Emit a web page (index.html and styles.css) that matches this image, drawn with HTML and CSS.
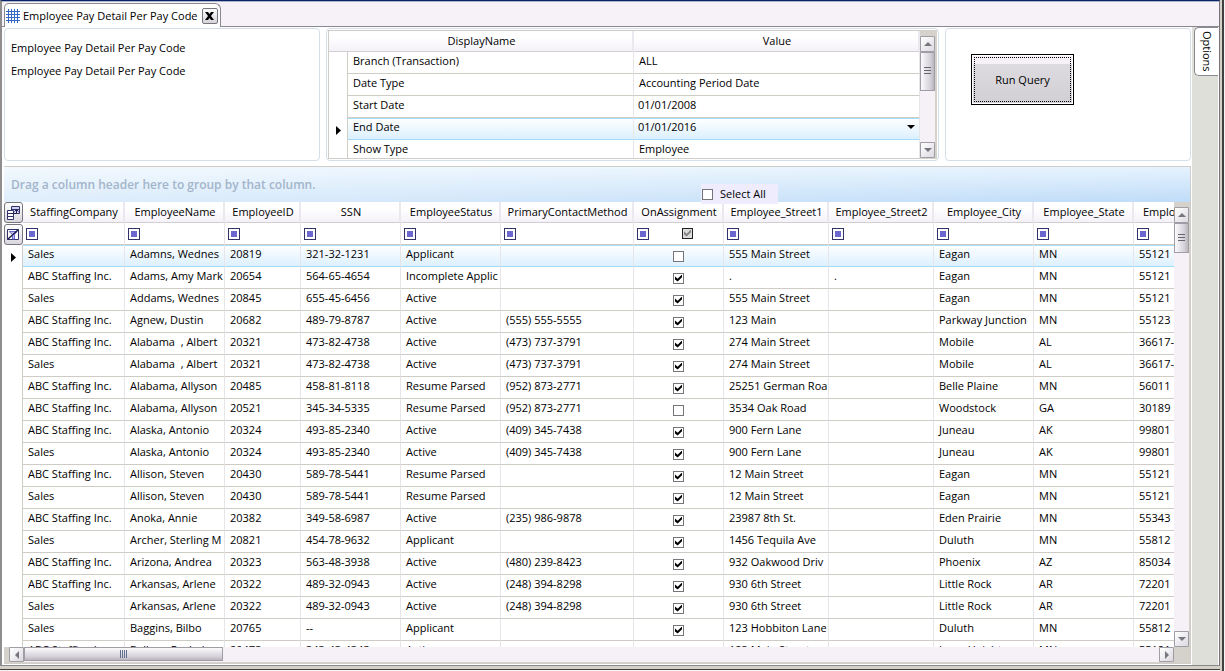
FILE: index.html
```html
<!DOCTYPE html>
<html lang="en">
<head>
<meta charset="utf-8">
<title>Employee Pay Detail Per Pay Code</title>
<link rel="stylesheet" href="styles.css">
</head>
<body>
<div class="window">
  <header class="tabstrip">
    <div class="tab">
      <svg class="tab-icon" viewBox="0 0 14 14"><path d="M0 2.500h14M0 5.500h14M0 8.500h14M0 11.500h14M2.500 0v14M5.500 0v14M8.500 0v14M11.500 0v14" stroke="#3468c4" fill="none"/></svg>
      <span>Employee Pay Detail Per Pay Code</span>
      <button class="tab-close" aria-label="Close tab"><svg viewBox="0 0 9 8"><path d="M0 0h3l1.500 2L6 0h3L6 4l3 4H6L4.500 6 3 8H0l3-4z" fill="#000"/></svg></button>
    </div>
  </header>
  <div class="body">
    <main class="content">
      <section class="panels">
        <div class="panel info"><p>Employee Pay Detail Per Pay Code</p><p>Employee Pay Detail Per Pay Code</p></div>
        <div class="panel params">
          <div class="params-view">
            <table class="params-table">
              <colgroup><col class="w-ind"><col><col></colgroup>
              <thead><tr><th colspan="2">DisplayName</th><th>Value</th></tr></thead>
              <tbody>
                <tr><td class="ind"></td><td>Branch (Transaction)</td><td>ALL</td></tr>
                <tr><td class="ind"></td><td>Date Type</td><td>Accounting Period Date</td></tr>
                <tr><td class="ind"></td><td>Start Date</td><td class="date">01/01/2008</td></tr>
                <tr class="current"><td class="ind"><svg class="arrow" viewBox="0 0 5 9"><path d="M0 0l5 4.500L0 9z"/></svg></td><td>End Date</td><td class="date"><div class="combo"><select aria-label="End Date"><option>01/01/2016</option></select><svg viewBox="0 0 8 4"><path d="M0 0h8L4 4z"/></svg></div></td></tr>
                <tr><td class="ind"></td><td>Show Type</td><td>Employee</td></tr>
              </tbody>
            </table>
          </div>
          <div class="vbar">
            <button class="sb" aria-label="Scroll up"><svg viewBox="0 0 8 4"><path d="M0 4h8L4 0z"/></svg></button>
            <div class="vtrack"><div class="vthumb tall"><i></i></div></div>
            <button class="sb" aria-label="Scroll down"><svg viewBox="0 0 8 4"><path d="M0 0h8L4 4z"/></svg></button>
          </div>
        </div>
        <div class="panel run"><button class="run-btn"><span>Run Query</span></button></div>
      </section>
      <section class="grid">
        <div class="groupby">Drag a column header here to group by that column.
          <label class="select-all"><input type="checkbox" class="cb"> Select All</label>
        </div>
        <div class="grid-body">
          <div class="grid-view">
            <table class="data">
              <colgroup><col class="w-ind"><col class="w102"><col class="w100"><col class="w76"><col class="w100"><col class="w100"><col class="w133"><col class="w90"><col class="w105"><col class="w105"><col class="w100"><col class="w100"><col class="w100"></colgroup>
              <thead>
                <tr class="head"><th class="corner"><button class="tool" aria-label="Choose columns"><svg viewBox="0 0 15 15"><path d="M5.500 1.500h8v7h-8z" fill="#cfcff2" stroke="#32326a"/><path d="M5.500 4.500h8" stroke="#32326a"/><path d="M1.500 5.500h6v9h-6z" fill="#fff" stroke="#32326a"/><path d="M1.500 8.500h6M1.500 11.500h6" stroke="#32326a"/><path d="M5 8.500h5.500V5M8.500 6.500l2-2 2 2" fill="none" stroke="#20204e"/></svg></button></th><th>StaffingCompany</th><th>EmployeeName</th><th>EmployeeID</th><th>SSN</th><th>EmployeeStatus</th><th>PrimaryContactMethod</th><th>OnAssignment</th><th>Employee_Street1</th><th>Employee_Street2</th><th>Employee_City</th><th>Employee_State</th><th class="last">Employee_Zip</th></tr>
                <tr class="filter"><th class="corner"><button class="tool" aria-label="Clear filters"><svg viewBox="0 0 15 15"><path d="M1.500 2.500h11v10h-11z" fill="#fff" stroke="#32326a"/><path d="M3 4.500h8L8.500 7.500V12h-2V7.500z" fill="#c4c3ee" stroke="#6a68d0"/><path d="M1.500 12.500l11-10" stroke="#20204e" stroke-width="1.500"/></svg></button></th><td><button class="f" aria-label="Filter StaffingCompany"></button></td><td><button class="f" aria-label="Filter EmployeeName"></button></td><td><button class="f" aria-label="Filter EmployeeID"></button></td><td><button class="f" aria-label="Filter SSN"></button></td><td><button class="f" aria-label="Filter EmployeeStatus"></button></td><td><button class="f" aria-label="Filter PrimaryContactMethod"></button></td><td><div class="filter-check"><button class="f" aria-label="Filter OnAssignment"></button><input type="checkbox" class="cb mixed" checked aria-label="Any assignment"></div></td><td><button class="f" aria-label="Filter Employee_Street1"></button></td><td><button class="f" aria-label="Filter Employee_Street2"></button></td><td><button class="f" aria-label="Filter Employee_City"></button></td><td><button class="f" aria-label="Filter Employee_State"></button></td><td><button class="f" aria-label="Filter Employee_Zip"></button></td></tr>
              </thead>
              <tbody>
<tr class="current"><td class="ind"><svg class="arrow" viewBox="0 0 5 9"><path d="M0 0l5 4.500L0 9z"/></svg></td><td>Sales</td><td>Adamns, Wednes</td><td>20819</td><td>321-32-1231</td><td>Applicant</td><td></td><td class="c"><input type="checkbox" class="cb" aria-label="On assignment"></td><td>555 Main Street</td><td></td><td>Eagan</td><td>MN</td><td>55121</td></tr>
<tr><td class="ind"></td><td>ABC Staffing Inc.</td><td>Adams, Amy Mark</td><td>20654</td><td>564-65-4654</td><td>Incomplete Applic</td><td></td><td class="c"><input type="checkbox" class="cb" checked aria-label="On assignment"></td><td>.</td><td>.</td><td>Eagan</td><td>MN</td><td>55121</td></tr>
<tr><td class="ind"></td><td>Sales</td><td>Addams, Wednes</td><td>20845</td><td>655-45-6456</td><td>Active</td><td></td><td class="c"><input type="checkbox" class="cb" checked aria-label="On assignment"></td><td>555 Main Street</td><td></td><td>Eagan</td><td>MN</td><td>55121</td></tr>
<tr><td class="ind"></td><td>ABC Staffing Inc.</td><td>Agnew, Dustin</td><td>20682</td><td>489-79-8787</td><td>Active</td><td>(555) 555-5555</td><td class="c"><input type="checkbox" class="cb" checked aria-label="On assignment"></td><td>123 Main</td><td></td><td>Parkway Junction</td><td>MN</td><td>55123</td></tr>
<tr><td class="ind"></td><td>ABC Staffing Inc.</td><td>Alabama&nbsp; , Albert</td><td>20321</td><td>473-82-4738</td><td>Active</td><td>(473) 737-3791</td><td class="c"><input type="checkbox" class="cb" checked aria-label="On assignment"></td><td>274 Main Street</td><td></td><td>Mobile</td><td>AL</td><td>36617-</td></tr>
<tr><td class="ind"></td><td>Sales</td><td>Alabama&nbsp; , Albert</td><td>20321</td><td>473-82-4738</td><td>Active</td><td>(473) 737-3791</td><td class="c"><input type="checkbox" class="cb" checked aria-label="On assignment"></td><td>274 Main Street</td><td></td><td>Mobile</td><td>AL</td><td>36617-</td></tr>
<tr><td class="ind"></td><td>ABC Staffing Inc.</td><td>Alabama, Allyson</td><td>20485</td><td>458-81-8118</td><td>Resume Parsed</td><td>(952) 873-2771</td><td class="c"><input type="checkbox" class="cb" checked aria-label="On assignment"></td><td>25251 German Roa</td><td></td><td>Belle Plaine</td><td>MN</td><td>56011</td></tr>
<tr><td class="ind"></td><td>ABC Staffing Inc.</td><td>Alabama, Allyson</td><td>20521</td><td>345-34-5335</td><td>Resume Parsed</td><td>(952) 873-2771</td><td class="c"><input type="checkbox" class="cb" aria-label="On assignment"></td><td>3534 Oak Road</td><td></td><td>Woodstock</td><td>GA</td><td>30189</td></tr>
<tr><td class="ind"></td><td>ABC Staffing Inc.</td><td>Alaska, Antonio</td><td>20324</td><td>493-85-2340</td><td>Active</td><td>(409) 345-7438</td><td class="c"><input type="checkbox" class="cb" checked aria-label="On assignment"></td><td>900 Fern Lane</td><td></td><td>Juneau</td><td>AK</td><td>99801</td></tr>
<tr><td class="ind"></td><td>Sales</td><td>Alaska, Antonio</td><td>20324</td><td>493-85-2340</td><td>Active</td><td>(409) 345-7438</td><td class="c"><input type="checkbox" class="cb" checked aria-label="On assignment"></td><td>900 Fern Lane</td><td></td><td>Juneau</td><td>AK</td><td>99801</td></tr>
<tr><td class="ind"></td><td>ABC Staffing Inc.</td><td>Allison, Steven</td><td>20430</td><td>589-78-5441</td><td>Resume Parsed</td><td></td><td class="c"><input type="checkbox" class="cb" checked aria-label="On assignment"></td><td>12 Main Street</td><td></td><td>Eagan</td><td>MN</td><td>55121</td></tr>
<tr><td class="ind"></td><td>Sales</td><td>Allison, Steven</td><td>20430</td><td>589-78-5441</td><td>Resume Parsed</td><td></td><td class="c"><input type="checkbox" class="cb" checked aria-label="On assignment"></td><td>12 Main Street</td><td></td><td>Eagan</td><td>MN</td><td>55121</td></tr>
<tr><td class="ind"></td><td>ABC Staffing Inc.</td><td>Anoka, Annie</td><td>20382</td><td>349-58-6987</td><td>Active</td><td>(235) 986-9878</td><td class="c"><input type="checkbox" class="cb" checked aria-label="On assignment"></td><td>23987 8th St.</td><td></td><td>Eden Prairie</td><td>MN</td><td>55343</td></tr>
<tr><td class="ind"></td><td>Sales</td><td>Archer, Sterling M</td><td>20821</td><td>454-78-9632</td><td>Applicant</td><td></td><td class="c"><input type="checkbox" class="cb" checked aria-label="On assignment"></td><td>1456 Tequila Ave</td><td></td><td>Duluth</td><td>MN</td><td>55812</td></tr>
<tr><td class="ind"></td><td>ABC Staffing Inc.</td><td>Arizona, Andrea</td><td>20323</td><td>563-48-3938</td><td>Active</td><td>(480) 239-8423</td><td class="c"><input type="checkbox" class="cb" checked aria-label="On assignment"></td><td>932 Oakwood Driv</td><td></td><td>Phoenix</td><td>AZ</td><td>85034</td></tr>
<tr><td class="ind"></td><td>ABC Staffing Inc.</td><td>Arkansas, Arlene</td><td>20322</td><td>489-32-0943</td><td>Active</td><td>(248) 394-8298</td><td class="c"><input type="checkbox" class="cb" checked aria-label="On assignment"></td><td>930 6th Street</td><td></td><td>Little Rock</td><td>AR</td><td>72201</td></tr>
<tr><td class="ind"></td><td>Sales</td><td>Arkansas, Arlene</td><td>20322</td><td>489-32-0943</td><td>Active</td><td>(248) 394-8298</td><td class="c"><input type="checkbox" class="cb" checked aria-label="On assignment"></td><td>930 6th Street</td><td></td><td>Little Rock</td><td>AR</td><td>72201</td></tr>
<tr><td class="ind"></td><td>Sales</td><td>Baggins, Bilbo</td><td>20765</td><td>--</td><td>Applicant</td><td></td><td class="c"><input type="checkbox" class="cb" checked aria-label="On assignment"></td><td>123 Hobbiton Lane</td><td></td><td>Duluth</td><td>MN</td><td>55812</td></tr>
<tr><td class="ind"></td><td>ABC Staffing Inc.</td><td>Ballam, Rachel</td><td>20473</td><td>343-43-4343</td><td>Active</td><td></td><td class="c"><input type="checkbox" class="cb" checked aria-label="On assignment"></td><td>123 Main Street</td><td></td><td>Inver Heights</td><td>MN</td><td>55121</td></tr>
              </tbody>
            </table>
          </div>
          <div class="vbar">
            <button class="sb" aria-label="Scroll up"><svg viewBox="0 0 8 4"><path d="M0 4h8L4 0z"/></svg></button>
            <div class="vtrack"><div class="vthumb"><i></i></div></div>
            <button class="sb" aria-label="Scroll down"><svg viewBox="0 0 8 4"><path d="M0 0h8L4 4z"/></svg></button>
          </div>
        </div>
        <div class="hbar">
          <button class="sb" aria-label="Scroll left"><svg viewBox="0 0 4 8"><path d="M4 0v8L0 4z"/></svg></button>
          <div class="htrack"><div class="hthumb"><i></i></div></div>
          <button class="sb" aria-label="Scroll right"><svg viewBox="0 0 4 8"><path d="M0 0v8l4-4z"/></svg></button>
        </div>
      </section>
    </main>
    <aside class="side"><button class="side-tab">Options</button></aside>
  </div>
</div>
<div class="edge"></div>
</body>
</html>
```

FILE: styles.css
```css
* { box-sizing: border-box; }
body {
  margin: 0; height: 100vh; display: flex; overflow: hidden;
  font: 11px/14px "Open Sans", "Noto Sans", sans-serif; color: #000;
  background: linear-gradient(0deg, #f4f4f4 1px, #404040 1px, #404040 2px, #d4d0c8 2px);
}
button, input, select { font: inherit; color: inherit; margin: 0; padding: 0; }
svg { display: block; }

.window {
  flex: 1; min-width: 0; display: flex; flex-direction: column;
  margin-bottom: 5px; border: 1px solid #8a8888; border-left: 2px solid #8f8d8d; border-top: 1px solid #0a246a;
  border-right: 1px solid #77757a; background: #fff;
}
.edge { width: 5px; background: linear-gradient(90deg, #d4d0c8 2px, #404040 2px, #404040 4px, #f4f4f4 4px); }

.tabstrip {
  height: 26px; flex: none; display: flex; align-items: flex-end; padding: 1px 2px 0;
  border-top: 1px solid #b0b4c8; border-bottom: 1px solid #8a8890; background: #f6f2f7;
}
.tab {
  height: 24px; display: flex; align-items: center; gap: 3px; padding: 0 2px 0 1px; margin-bottom: -1px;
  background: #fff; border: 1px solid #8a8890; border-bottom: 0; border-radius: 5px 6px 0 0;
}
.tab-icon { width: 14px; height: 14px; }
.tab-close {
  width: 16px; height: 16px; margin-left: 1px; display: grid; place-items: center;
  border: 1px solid #77757d; border-radius: 2px; background: linear-gradient(#fff, #d6d3da);
}
.tab-close svg { width: 9px; height: 8px; }

.body { flex: 1; min-height: 0; display: flex; }
.content { flex: 1; min-width: 0; display: flex; flex-direction: column; padding: 1px 1px 1px 2px; }
.side { width: 27px; flex: none; background: #dddfd8; border-right: 1px solid #fff; }
.side-tab {
  width: 24px; height: 49px; margin-left: 2px; writing-mode: vertical-rl; text-align: center;
  border: 1px solid #8a8890; border-right: 0; border-radius: 5px 0 0 5px; background: #fff;
}

.panels { display: grid; grid-template-columns: 316fr 613fr 246fr; gap: 6px; height: 133px; flex: none; }
.panel { border: 1px solid #d3dfe9; border-radius: 4px; background: #fff; min-width: 0; }
.info { padding: 12px 6px; }
.info p { margin: 0 0 9px; }
.params { display: flex; padding: 1px; overflow: hidden; }
.params-view { flex: 1; min-width: 0; overflow: hidden; border: 1px solid #d0ccc8; border-right: 0; }
.run { padding: 25px; }
.run-btn {
  width: 103px; height: 51px; padding: 2px; border: 1px solid #000;
  background: linear-gradient(#f6f1f6 9px, #dedbe0 9px, #d2cfd4); box-shadow: inset 0 0 0 1px #fff;
}
.run-btn span { display: grid; place-items: center; height: 100%; border: 1px dotted #000; }

table { border-collapse: separate; border-spacing: 0; table-layout: fixed; width: 100%; }
th {
  height: 21px; padding: 0 2px 1px 4px; font-weight: normal; text-align: center; white-space: nowrap; overflow: hidden;
  border-right: 2px solid #ece8ef; border-bottom: 1px solid #d2cfd2; background: linear-gradient(#fff 30%, #f5f1f9);
}
th.last { text-align: left; padding-left: 9px; }
td {
  height: 22px; padding: 0 4px 3px 5px; white-space: nowrap; overflow: hidden;
  border-right: 1px solid #e8e5e8; border-bottom: 1px solid #cfccc6;
}
td.ind { padding: 3px 0 0 7px; border-right: 1px solid #d0ccc6; border-bottom: 0; }
.arrow { width: 5px; height: 9px; }
.current td:not(.ind) {
  border-bottom-color: #a5daf8; background: linear-gradient(#fff, #dcf0fe); box-shadow: inset 0 1px #a5e0ff;
}
.params td.date { padding-left: 4px; }
.combo { display: flex; align-items: center; }
.combo select { flex: 1; min-width: 0; height: 14px; appearance: none; border: 0; background: transparent; }
.combo svg { width: 8px; height: 4px; }

.w-ind { width: 19px; }
.w76 { width: 76px; }
.w90 { width: 90px; }
.w100 { width: 100px; }
.w102 { width: 102px; }
.w105 { width: 105px; }
.w133 { width: 133px; }

.grid { flex: 1; min-height: 0; display: flex; flex-direction: column; margin-top: 5px; border: 1px solid #d0ccc8; border-left: 0; }
.groupby {
  position: relative; height: 35px; flex: none; padding: 11px 7px; font-weight: 600; font-size: 12px; color: #a3b5ca;
  background: linear-gradient(100deg, rgba(255,255,255,.5), rgba(255,255,255,0)), linear-gradient(#e6f3fe, #bfdcf8);
}
.select-all {
  position: absolute; left: 697px; bottom: -2px; width: 77px; height: 20px; padding-left: 1px; z-index: 1;
  display: flex; align-items: center; gap: 7px; font-size: 11px; font-weight: normal; color: #000; background: #efecfd;
}
.grid-body { flex: 1; min-height: 0; display: flex; }
.grid-view { flex: 1; min-width: 0; overflow: hidden; }
.data { width: 1230px; }
.data th.corner { padding: 0; overflow: visible; border: 0; }
.tool {
  display: grid; place-items: center; width: 19px; height: 21px; border: 1px solid #77757d; border-radius: 3px;
  background: linear-gradient(#fff, #d9d6de);
}
.tool svg { width: 15px; height: 15px; }
.filter td { padding: 0 3px; border-bottom: 1px solid #cfccc6; }
.f {
  display: block; width: 12px; height: 12px; border: 1px solid #32326a;
  background: linear-gradient(#6a68d0, #6a68d0) center / 6px 6px no-repeat #fff;
}
.filter-check { display: flex; gap: 33px; }
td.c { text-align: center; padding: 1px 0 0; }

.cb { appearance: none; display: block; flex: none; width: 11px; height: 11px; border: 1px solid #77757a; background: #fff; }
.c .cb { margin: 0 auto; }
.cb:checked::after {
  content: ""; display: block; width: 7px; height: 7px; margin: 1px; background: #000;
  clip-path: polygon(0 30%, 38% 62%, 100% 0, 100% 40%, 38% 100%, 0 70%);
}
.cb.mixed { border-color: #222; background: #dcdadc; }
.cb.mixed:checked::after { background: #858385; }

.vbar { width: 16px; flex: none; display: flex; flex-direction: column; padding: 5px 1px 0 0; background: #d5d2cb; }
.params .vbar { padding: 6px 2px 1px 0; width: 17px; }
.sb {
  width: 15px; height: 16px; flex: none; display: grid; place-items: center;
  border: 1px solid #a09da6; border-radius: 1px; background: linear-gradient(135deg, #fff, #dcd9e0);
}
.sb svg { width: 8px; height: 4px; fill: #77757d; }
.vtrack { flex: 1; background: #f5f1f6; }
.vthumb {
  width: 15px; height: 30px; display: grid; place-items: center; border: 1px solid #a09da6;
  background: linear-gradient(90deg, #fbfafc, #d5d2da 70%, #b9b6be);
}
.vthumb.tall { height: 39px; }
.vthumb i { width: 7px; height: 9px; background: repeating-linear-gradient(#66646c 0 1px, transparent 1px 3px); }
.hbar { height: 16px; flex: none; display: flex; padding: 0 16px 1px 5px; background: #d5d2cb; }
.hbar .sb { height: 15px; }
.hbar .sb svg { width: 4px; height: 8px; }
.htrack { flex: 1; background: #f5f1f6; }
.hthumb {
  width: 17.5%; height: 14px; display: grid; place-items: center; border: 1px solid #a09da6;
  background: linear-gradient(#fbfafc, #d5d2da 70%, #b9b6be);
}
.hthumb i { width: 7px; height: 8px; background: repeating-linear-gradient(90deg, #5f6f90 0 1px, transparent 1px 2px); }
```
